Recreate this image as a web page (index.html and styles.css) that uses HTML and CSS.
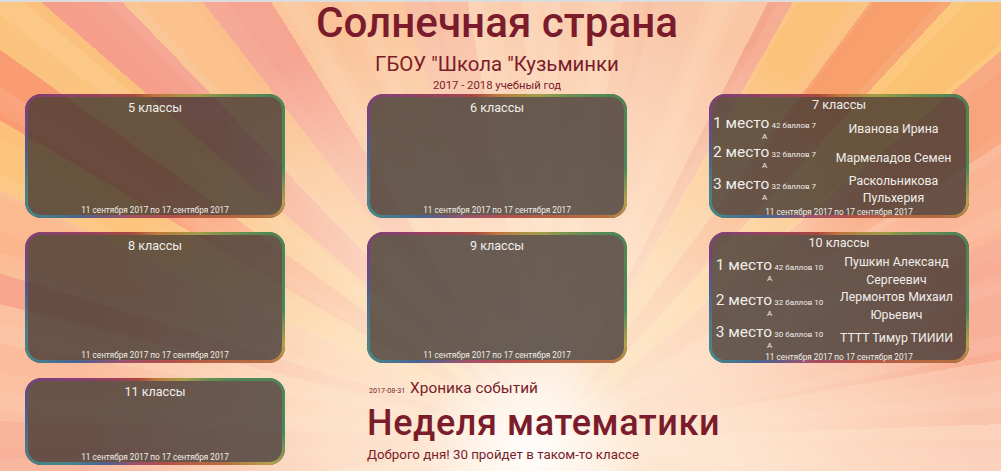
FILE: index.html
```html
<!DOCTYPE html>
<html lang="ru">

<head>
    <meta charset="UTF-8">
    <meta name="viewport" content="width=device-width, initial-scale=1.0">
    <title>Солнечная страна</title>
    <link rel="stylesheet" href="styles.css">
</head>

<body>
    <header class="head">
        <h1>Солнечная страна</h1>
        <h2>ГБОУ "Школа "Кузьминки</h2>
        <p>2017 - 2018 учебный год</p>
    </header>

    <main class="board">
        <section class="card">
            <h3>5 классы</h3>
            <p class="week">11 сентября 2017 по 17 сентября 2017</p>
        </section>
        <section class="card">
            <h3>6 классы</h3>
            <p class="week">11 сентября 2017 по 17 сентября 2017</p>
        </section>
        <section class="card card-tight">
            <h3>7 классы</h3>
            <table class="places places-7">
                <tr><td class="place"><b>1 место</b> <small>42 баллов 7 А</small></td><td class="name">Иванова Ирина</td></tr>
                <tr><td class="place"><b>2 место</b> <small>32 баллов 7 А</small></td><td class="name">Мармеладов Семен</td></tr>
                <tr><td class="place"><b>3 место</b> <small>32 баллов 7 А</small></td><td class="name">Раскольникова Пульхерия</td></tr>
            </table>
            <p class="week">11 сентября 2017 по 17 сентября 2017</p>
        </section>

        <section class="card">
            <h3>8 классы</h3>
            <p class="week">11 сентября 2017 по 17 сентября 2017</p>
        </section>
        <section class="card">
            <h3>9 классы</h3>
            <p class="week">11 сентября 2017 по 17 сентября 2017</p>
        </section>
        <section class="card card-tight">
            <h3>10 классы</h3>
            <table class="places places-10">
                <tr><td class="place"><b>1 место</b> <small>42 баллов 10 А</small></td><td class="name">Пушкин Александ Сергеевич</td></tr>
                <tr><td class="place"><b>2 место</b> <small>32 баллов 10 А</small></td><td class="name">Лермонтов Михаил Юрьевич</td></tr>
                <tr><td class="place"><b>3 место</b> <small>30 баллов 10 А</small></td><td class="name">ТТТТ Тимур ТИИИИ</td></tr>
            </table>
            <p class="week">11 сентября 2017 по 17 сентября 2017</p>
        </section>

        <section class="card card-last">
            <h3>11 классы</h3>
            <p class="week">11 сентября 2017 по 17 сентября 2017</p>
        </section>
        <article class="news">
            <p class="news-line"><time>2017-08-31</time> Хроника событий</p>
            <h2>Неделя математики</h2>
            <p class="news-text">Доброго дня! 30 пройдет в таком-то классе</p>
        </article>
    </main>
</body>

</html>
```

FILE: styles.css
```css
html {
    height: 100%;
    overflow: hidden;
}

body {
    margin: 0;
    height: 471px;
    box-sizing: border-box;
    overflow: hidden;
    border-top: 2px solid #dcdcdc;
    font-family: Roboto, "Noto Sans", sans-serif;
    color: #7a1c2b;
    background-color: #fcd0ac;
    background-image:
        radial-gradient(circle 110px at 530px 448px, rgba(255, 255, 255, 0.9), rgba(255, 250, 240, 0) 100%),
        radial-gradient(circle 450px at 530px 440px, rgba(254, 240, 222, 0.95), rgba(254, 236, 214, 0.75) 45%, rgba(253, 225, 200, 0.5) 75%, rgba(253, 225, 200, 0) 100%),
        repeating-conic-gradient(from 0deg at 545px 440px, rgba(255, 255, 255, 0.07) 0 2deg, rgba(255, 255, 255, 0) 2deg 7deg),
        repeating-conic-gradient(from 2deg at 545px 440px, rgba(240, 130, 100, 0.06) 0 3deg, rgba(240, 130, 100, 0) 3deg 11deg),
        conic-gradient(from 0deg at 545px 440px,
            #fbcfb0 0deg 10deg, #f9c6a8 10deg 20deg, #fbcaa8 20deg 27deg,
            #f5a78c 27deg 29.5deg, #fbc27c 29.5deg 36.6deg, #f8a06c 36.6deg 42.9deg,
            #fbc474 42.9deg 49.5deg, #f8a47c 49.5deg 57deg, #fbb898 57deg 66deg,
            #f9b098 66deg 80deg, #fbc4ac 80deg 88deg, #fcd2bc 88deg 98deg,
            #fbc8b0 98deg 112deg, #fcd6c0 112deg 250deg, #fbc8ae 250deg 262deg,
            #f9b49c 262deg 272deg, #fbc0a0 272deg 284deg, #f8a68e 284deg 287deg,
            #fbba90 287deg 294.6deg, #fcc47c 294.6deg 300.4deg, #fa9c72 300.4deg 305.6deg,
            #fbc47e 305.6deg 311deg, #f6a08e 311deg 316deg, #fbc28e 316deg 322deg,
            #f6a592 322deg 328deg, #fbc69c 328deg 342deg, #f9bea4 342deg 350deg,
            #fbcfb0 350deg 360deg);
}

.head {
    width: 994px;
    margin-bottom: 2px;
    text-align: center;
}

.head h1 {
    margin: 0;
    font-size: 42.2px;
    line-height: 42px;
    font-weight: 500;
}

.head h2 {
    margin: 8px 0 0;
    font-size: 20.4px;
    line-height: 24px;
    font-weight: 400;
}

.head p {
    margin: 3px 0 0;
    font-size: 11.3px;
    line-height: 13px;
}

.board {
    display: grid;
    grid-template-columns: repeat(3, 260px);
    grid-template-rows: 124px 131px 88px;
    column-gap: 82px;
    row-gap: 14px;
    padding-left: 25px;
}

.card {
    position: relative;
    display: flex;
    flex-direction: column;
    border-radius: 16px;
    padding: 6px 3px 2px;
    background-color: rgba(52, 44, 40, 0.74);
    color: #f0eeea;
}

/* rainbow edge, only the ring of the pseudo element is left visible */
.card::before {
    content: "";
    position: absolute;
    inset: 0;
    padding: 3px;
    border-radius: 16px;
    background: conic-gradient(from 0deg, #c8793f 0deg, #a8a548 35deg, #4b8c58 62deg, #4b8c58 85deg, #3f9060 95deg, #bdaa4c 110deg, #c0703f 120deg, #bf4f48 165deg, #a84f6e 205deg, #46659a 232deg, #3f8f92 245deg, #4a7f90 258deg, #4a5f96 272deg, #7b3f86 290deg, #9a3f66 310deg, #b0473f 340deg, #c8793f 360deg);
    -webkit-mask: linear-gradient(#000 0 0) content-box, linear-gradient(#000 0 0);
    -webkit-mask-composite: xor;
    mask-composite: exclude;
    opacity: 0.9;
}

.card h3 {
    margin: 0;
    font-size: 12.6px;
    line-height: 16px;
    font-weight: 400;
    text-align: center;
}

.card-tight {
    padding-top: 3px;
    padding-bottom: 0;
}

.card-last {
    margin-top: 1px;
}

.week {
    position: relative;
    margin: auto 0 0;
    font-size: 8.2px;
    line-height: 12px;
    text-align: center;
}

.places {
    width: calc(100% + 1px);
    margin-top: 2px;
    border-collapse: collapse;
    table-layout: fixed;
}

.places + .week {
    margin-top: -1px;
}

.places td {
    padding: 0;
    text-align: center;
}

.places .place {
    padding-top: 2px;
}

.places-7 tr {
    height: 29px;
}

.places-7 .place {
    width: 105px;
    padding-right: 3px;
}

.places-7 .name {
    line-height: 17px;
}

.places-10 {
    width: calc(100% + 3px);
    margin-top: 3px;
}

.places-10 + .week {
    margin-top: -2px;
}

.places-10 tr {
    height: 29px;
}

.places-10 .place {
    width: 109px;
    padding-left: 3px;
}

.place {
    font-size: 9px;
    line-height: 10px;
}

.place b {
    font-size: 15.5px;
    line-height: 8px;
    font-weight: 400;
}

.place small {
    font-size: 8px;
}

.name {
    font-size: 12.3px;
    line-height: 17.5px;
}

.news {
    grid-column: 2 / 4;
}

.news-line {
    margin: 2px 0 0 2px;
    font-size: 15.4px;
    line-height: 18px;
}

.news-line time {
    font-size: 7.2px;
    margin-right: 1px;
}

.news h2 {
    margin: 2px 0 0;
    font-size: 36px;
    line-height: 42px;
    font-weight: 500;
    letter-spacing: 0.6px;
}

.news-text {
    margin: 2px 0 0;
    font-size: 13.3px;
    line-height: 18px;
}
```
